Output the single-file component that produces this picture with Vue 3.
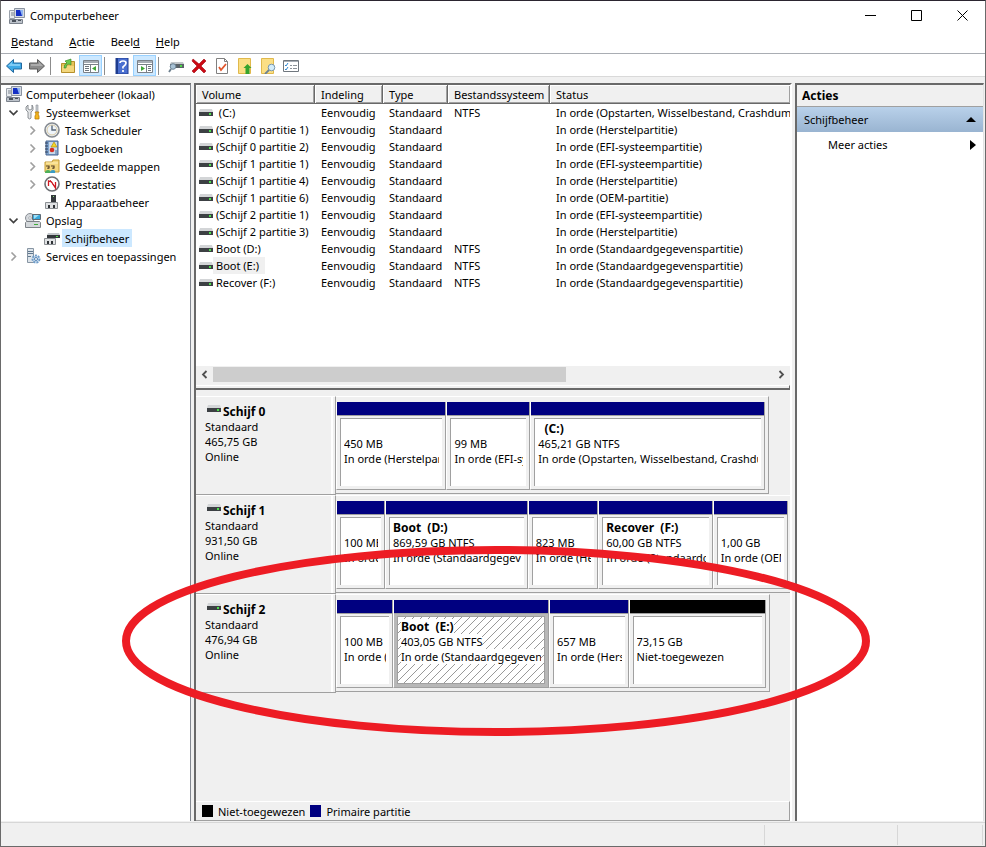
<template>
  <div class="window">
    <svg class="sprite" aria-hidden="true">
      <symbol id="i-computer" viewBox="0 0 16 16">
        <path d="M5.500.5h10v9h-10z" fill="#d5dae2" stroke="#8b93a0" />
        <path d="M7 2h7v6H7z" fill="#1530c4" />
        <path d="M11 2h3v6h-1z" fill="#8fb4f2" />
        <path d="M.5 2.500h5v8h-5z" fill="#e8ebee" stroke="#9aa1aa" />
        <path d="M2 5h3M2 7h3" stroke="#79818d" />
        <path d="M.5 11.500h13v4H.5z" fill="#bcc2ca" stroke="#7b828c" />
        <path d="M3 12h4v2H3zM9 12h3v1H9z" fill="#4a515b" />
      </symbol>
      <symbol id="i-tools" viewBox="0 0 16 16">
        <path d="M3 1v4l2 1 2-1V1l1 2v3L6 8v6q-1 2-3 0V8L1 6V3z" fill="#e4e6e8" stroke="#74797f" stroke-width=".8" />
        <path d="M11 1h2v7h-2z" fill="#c8cdd2" stroke="#8a8f95" stroke-width=".6" />
        <path d="M10 8h4l-1 2 1 2v3h-4v-3l1-2z" fill="#f5b51c" stroke="#b87d0a" stroke-width=".8" />
      </symbol>
      <symbol id="i-clock" viewBox="0 0 16 16">
        <circle cx="8" cy="8" r="7" fill="#eef4fa" stroke="#858a90" stroke-width="1.600" />
        <circle cx="8" cy="8" r="5" fill="none" stroke="#d9c9a2" />
        <path d="M8 3.500V8h4" fill="none" stroke="#59677a" stroke-width="1.400" />
      </symbol>
      <symbol id="i-log" viewBox="0 0 16 16">
        <path d="M2 1h12v14H2z" fill="#7fa4cf" stroke="#4a6791" />
        <path d="M5 2h8v12H5z" fill="#c9d9ea" />
        <path d="M1 3h3M1 6h3M1 9h3M1 12h3" stroke="#2e3f5a" />
        <path d="M10 2l3 5H7z" fill="#f6d525" stroke="#a98b08" stroke-width=".6" />
        <circle cx="8" cy="10" r="2.300" fill="#d62d22" />
        <path d="M11 11h2M11 13h2" stroke="#486d9b" />
      </symbol>
      <symbol id="i-shared" viewBox="0 0 16 16">
        <path d="M1 4h7l1-2h6v12H1z" fill="#f4d67c" stroke="#c49b35" />
        <path d="M2 5h12" stroke="#fff0b8" />
        <path d="M2 8h3v2H4v1M7 8h3v2H9v1" fill="none" stroke="#554026" stroke-width="1.200" />
        <path d="M1 15q0-3 3-3t2 3z" fill="#4eb05a" />
        <path d="M6 15q0-3 3-3t2 3z" fill="#3a9bc4" />
      </symbol>
      <symbol id="i-perf" viewBox="0 0 16 16">
        <circle cx="8" cy="8" r="7" fill="#fff" stroke="#6c6f73" stroke-width="1.600" />
        <path d="M4.500 10V5l3 1 4 6V6" fill="none" stroke="#cf1820" stroke-width="1.300" />
        <path d="M6 4l5 7" stroke="#cf1820" />
      </symbol>
      <symbol id="i-device" viewBox="0 0 16 16">
        <path d="M7 1h5v8H7z" fill="#34383d" />
        <path d="M9 2h1v1H9z" fill="#8ee07b" />
        <path d="M1.500 8.500h12v6h-12z" fill="#dfe1e3" stroke="#8b8f93" />
        <path d="M4 11h2v3H4zM9 11h2v3H9z" fill="#2f3236" />
      </symbol>
      <symbol id="i-storage" viewBox="0 0 16 16">
        <circle cx="5" cy="6" r="4.500" fill="#d5d9dd" stroke="#888d93" />
        <circle cx="5" cy="6" r="1.300" fill="#fff" stroke="#888d93" stroke-width=".6" />
        <path d="M7.500 2.500h8v5h-8z" fill="#38a9dd" stroke="#5f6a74" />
        <path d="M9 3h5l-5 4z" fill="#a2def5" />
        <path d="M.5 10.500l1-1h13l1 1v5H.5z" fill="#d4d8db" stroke="#7d8287" />
        <path d="M9 12h4v1H9z" fill="#3fae3b" />
      </symbol>
      <symbol id="i-diskmgmt" viewBox="0 0 16 16">
        <path d="M4 3h11l1 2H3z" fill="#c3c7ca" />
        <path d="M3 5h13v3H3z" fill="#33373b" />
        <path d="M12 6h2v1h-2z" fill="#4fdc48" />
        <path d="M.5 8.500h11v6H.5z" fill="#e1e3e5" stroke="#8b8f93" />
        <path d="M3 11h2v3H3zM7 11h2v3H7z" fill="#2f3236" />
      </symbol>
      <symbol id="i-services" viewBox="0 0 16 16">
        <path d="M2.500.5h6v14h-6z" fill="#dde4ea" stroke="#8795a3" />
        <path d="M3 3.500h5M3 5.500h5M3 8.500h3" stroke="#60788f" />
        <circle cx="11" cy="11" r="3.500" fill="#cfe0f0" stroke="#6f9cc8" stroke-width="2" stroke-dasharray="2 1" />
        <circle cx="11" cy="11" r="1.500" fill="#fff" stroke="#5483b4" />
      </symbol>
      <symbol id="i-drive" viewBox="0 0 14 10">
        <path d="M1 1h12l1 3H0z" fill="#d3d5d7" />
        <path d="M0 4h14v4H0z" fill="#3c4043" />
        <path d="M10 5h2v2h-2z" fill="#4be04b" />
      </symbol>
      <symbol id="i-back" viewBox="0 0 16 16">
        <path d="M.5 8l7-6.500v3.500h8v6h-8v3.500z" fill="#3fa9e6" stroke="#22689e" stroke-linejoin="round" />
        <path d="M2 8l4-4v2h8v2z" fill="#7fcbf5" />
      </symbol>
      <symbol id="i-forward" viewBox="0 0 16 16">
        <path d="M15.500 8l-7-6.500v3.500h-8v6h8v3.500z" fill="#8c8c8c" stroke="#5c5c5c" stroke-linejoin="round" />
        <path d="M14 8l-4-4v2H2v2z" fill="#acacac" />
      </symbol>
      <symbol id="i-folderup" viewBox="0 0 16 16">
        <path d="M1.500 5.500h5l1-2h7v11h-13z" fill="#e6c25a" stroke="#b58f2b" />
        <path d="M2 8h12v6H2z" fill="#f2d67c" />
        <path d="M4 10q0-4 3-5L5 3l6-2v6L9 6Q6 6 6 10z" fill="#6dc94e" stroke="#2e8420" stroke-width=".6" />
      </symbol>
      <symbol id="i-treepane" viewBox="0 0 16 16">
        <path d="M.5 2.500h15v12H.5z" fill="#fff" stroke="#7a8088" />
        <path d="M1 3h14v2H1z" fill="#a7adb5" />
        <path d="M1 6.500h14M7.500 7v7" stroke="#7a8088" />
        <path d="M2 8.500h4M2 10.500h4M2 12.500h4" stroke="#6d747c" />
        <path d="M13 8v5l-4-2.500z" fill="#3ea635" />
      </symbol>
      <symbol id="i-help" viewBox="0 0 16 16">
        <path d="M2 0h12v16H2z" fill="#4a6fd0" stroke="#1e3d91" />
        <path d="M2 0h2v16H2z" fill="#1d3c8e" />
        <path d="M6 5q0-2 3-2t3 2q0 2-3 4v1.500M9 12v2" fill="none" stroke="#fff" stroke-width="1.700" />
      </symbol>
      <symbol id="i-actionpane" viewBox="0 0 16 16">
        <path d="M.5 2.500h15v12H.5z" fill="#fff" stroke="#7a8088" />
        <path d="M1 3h14v2H1z" fill="#a7adb5" />
        <path d="M1 6.500h14M9.500 7v7" stroke="#7a8088" />
        <path d="M11 8.500h3M11 10.500h3M11 12.500h3" stroke="#6d747c" />
        <path d="M4 8v5l4-2.500z" fill="#3ea635" />
      </symbol>
      <symbol id="i-rescan" viewBox="0 0 16 16">
        <path d="M3 4h12l1 2H2z" fill="#c3c7ca" />
        <path d="M2 6h14v4H2z" fill="#5b6368" />
        <path d="M12 7h2v2h-2z" fill="#4fdc48" />
        <circle cx="5" cy="8.500" r="2.800" fill="#a9c3d6" stroke="#6f8799" />
        <path d="M3 11l-2 3" stroke="#6d7f8e" stroke-width="1.800" />
      </symbol>
      <symbol id="i-delete" viewBox="0 0 16 16">
        <path d="M2 1l6 5 5-5 2 2-5 5 5 5-2 2-5-5-5 5-2-2 5-5-5-5z" fill="#cc0a14" stroke="#9d0710" stroke-width=".6" />
      </symbol>
      <symbol id="i-check" viewBox="0 0 16 16">
        <path d="M2.500.5h8l3 3v12h-11z" fill="#fff" stroke="#808080" />
        <path d="M10.500.5v3h3" fill="none" stroke="#808080" />
        <path d="M5 9l2 3 5-6" fill="none" stroke="#e1562c" stroke-width="1.800" />
      </symbol>
      <symbol id="i-foldernew" viewBox="0 0 16 16">
        <path d="M1.500.5h12v15h-12z" fill="#fbdf85" stroke="#e0b94c" />
        <path d="M10.500 6l4 4h-2v6h-4v-6h-2z" fill="#34a32d" />
      </symbol>
      <symbol id="i-foldersearch" viewBox="0 0 16 16">
        <path d="M1.500.5h12v15h-12z" fill="#fbdf85" stroke="#e0b94c" />
        <circle cx="11.500" cy="9.500" r="3.300" fill="#d3ecfa" stroke="#7896ac" />
        <path d="M9 12l-4 4" stroke="#6c8291" stroke-width="1.800" />
      </symbol>
      <symbol id="i-list" viewBox="0 0 16 16">
        <path d="M.5 2.500h15v11H.5z" fill="#fff" stroke="#70777e" />
        <path d="M1 3.500h14" stroke="#a7adb5" />
        <path d="M2 7l1 1 2-3M2 11l1 1 2-3" fill="none" stroke="#2f86cf" />
        <path d="M7 7.500h2M10 7.500h4M7 10.500h2M10 10.500h4" stroke="#8b9299" />
      </symbol>
    </svg>

    <header class="titlebar">
      <svg class="icon"><use href="#i-computer" /></svg>
      <h1>Computerbeheer</h1>
      <div class="controls">
        <button aria-label="Minimaliseren">
          <svg width="11" height="11"><path d="M0 5.500h11" stroke="#000" /></svg>
        </button>
        <button aria-label="Maximaliseren">
          <svg width="11" height="11"><path d="M.5.5h10v10H.5z" fill="none" stroke="#000" /></svg>
        </button>
        <button aria-label="Sluiten">
          <svg width="11" height="11"><path d="M.5.5l10 10M10.500.5l-10 10" stroke="#000" /></svg>
        </button>
      </div>
    </header>

    <nav class="menubar">
      <button><u>B</u>estand</button>
      <button><u>A</u>ctie</button>
      <button>Beel<u>d</u></button>
      <button><u>H</u>elp</button>
    </nav>

    <div class="toolbar">
      <template v-for="(group, g) in tools" :key="g">
        <span v-if="g > 0" class="separator"></span>
        <button
          v-for="tool in group"
          :key="tool.icon"
          :class="{ pressed: tool.pressed }"
          :aria-label="tool.label"
        >
          <svg class="icon"><use :href="`#i-${tool.icon}`" /></svg>
        </button>
      </template>
    </div>

    <main class="panes">
      <aside class="tree">
        <ul>
          <li v-for="node in tree" :key="node.label" :class="`level-${node.level}`">
            <span v-if="node.level > 0" class="arrow">
              <svg v-if="node.state === 'open'" width="9" height="9">
                <path d="M.5 2.500l4 4 4-4" fill="none" stroke="#404040" stroke-width="1.600" />
              </svg>
              <svg v-if="node.state === 'closed'" width="9" height="9">
                <path d="M2.500.5l4 4-4 4" fill="none" stroke="#a0a0a0" stroke-width="1.600" />
              </svg>
            </span>
            <svg class="icon"><use :href="`#i-${node.icon}`" /></svg>
            <button :class="{ selected: node.selected }">{{ node.label }}</button>
          </li>
        </ul>
      </aside>

      <section class="center">
        <div class="volumes">
          <table>
            <colgroup>
              <col class="col-volume" />
              <col class="col-layout" />
              <col class="col-type" />
              <col class="col-fs" />
              <col />
            </colgroup>
            <thead>
              <tr>
                <th v-for="column in columns" :key="column">{{ column }}</th>
              </tr>
            </thead>
            <tbody>
              <tr v-for="volume in volumes" :key="volume.name">
                <td class="volume-cell">
                  <svg class="drive"><use href="#i-drive" /></svg>
                  <span :class="{ focused: volume.focused }">{{ volume.name }}</span>
                </td>
                <td>Eenvoudig</td>
                <td>Standaard</td>
                <td>{{ volume.fs }}</td>
                <td>{{ volume.status }}</td>
              </tr>
            </tbody>
          </table>
        </div>

        <div class="scrollbar">
          <button aria-label="Naar links">
            <svg width="7" height="9"><path d="M5.500 1L2 4.500 5.500 8" fill="none" stroke="#505050" stroke-width="1.800" /></svg>
          </button>
          <div class="scroll-track"><div class="thumb"></div></div>
          <button aria-label="Naar rechts">
            <svg width="7" height="9"><path d="M1.500 1L5 4.500 1.500 8" fill="none" stroke="#505050" stroke-width="1.800" /></svg>
          </button>
        </div>
        <div class="splitter"></div>

        <div class="disks">
          <div v-for="disk in disks" :key="disk.name" class="disk">
            <div class="disk-label">
              <h2><svg class="drive"><use href="#i-drive" /></svg>{{ disk.name }}</h2>
              <p>Standaard</p>
              <p>{{ disk.size }}</p>
              <p>Online</p>
            </div>
            <div class="partitions" :style="{ width: trackWidth(disk) }">
              <div
                v-for="(part, i) in disk.parts"
                :key="i"
                class="partition"
                :class="{ selected: part.selected, free: part.free }"
                :style="{ flexGrow: part.span }"
              >
                <div class="bar"></div>
                <div class="body">
                  <div class="box">
                    <p><b>{{ part.name || '\u00a0' }}</b></p>
                    <p><span>{{ part.size }}</span></p>
                    <p><span>{{ part.status }}</span></p>
                  </div>
                </div>
              </div>
            </div>
          </div>
        </div>

        <footer class="legend">
          <span class="swatch black"></span>Niet-toegewezen
          <span class="swatch navy"></span>Primaire partitie
        </footer>
      </section>

      <aside class="actions">
        <h2>Acties</h2>
        <button class="action-head">
          Schijfbeheer
          <svg width="10" height="5"><path d="M0 5l5-5 5 5z" /></svg>
        </button>
        <button class="action-item">
          Meer acties
          <svg width="6" height="10"><path d="M0 0l6 5-6 5z" /></svg>
        </button>
      </aside>
    </main>

    <div class="statusbar">
      <span></span>
      <span></span>
      <span></span>
    </div>

    <svg class="marker" width="750" height="194" aria-hidden="true">
      <ellipse cx="376" cy="97" rx="370" ry="91" fill="none" stroke="#ed1c24" stroke-width="8" />
    </svg>
  </div>
</template>

<script setup>
const tools = [
  [
    { icon: 'back', label: 'Vorige' },
    { icon: 'forward', label: 'Volgende' }
  ],
  [
    { icon: 'folderup', label: 'Niveau omhoog' },
    { icon: 'treepane', label: 'Consolestructuur', pressed: true }
  ],
  [
    { icon: 'help', label: 'Help' },
    { icon: 'actionpane', label: 'Actievenster', pressed: true }
  ],
  [
    { icon: 'rescan', label: 'Opnieuw scannen' },
    { icon: 'delete', label: 'Verwijderen' },
    { icon: 'check', label: 'Eigenschappen' },
    { icon: 'foldernew', label: 'Openen' },
    { icon: 'foldersearch', label: 'Verkennen' },
    { icon: 'list', label: 'Instellingen' }
  ]
]

const tree = [
  { label: 'Computerbeheer (lokaal)', icon: 'computer', level: 0 },
  { label: 'Systeemwerkset', icon: 'tools', level: 1, state: 'open' },
  { label: 'Task Scheduler', icon: 'clock', level: 2, state: 'closed' },
  { label: 'Logboeken', icon: 'log', level: 2, state: 'closed' },
  { label: 'Gedeelde mappen', icon: 'shared', level: 2, state: 'closed' },
  { label: 'Prestaties', icon: 'perf', level: 2, state: 'closed' },
  { label: 'Apparaatbeheer', icon: 'device', level: 2 },
  { label: 'Opslag', icon: 'storage', level: 1, state: 'open' },
  { label: 'Schijfbeheer', icon: 'diskmgmt', level: 2, selected: true },
  { label: 'Services en toepassingen', icon: 'services', level: 1, state: 'closed' }
]

const columns = ['Volume', 'Indeling', 'Type', 'Bestandssysteem', 'Status']

const volumes = [
  { name: '\u00a0(C:)', fs: 'NTFS', status: 'In orde (Opstarten, Wisselbestand, Crashdump)' },
  { name: '(Schijf 0 partitie 1)', status: 'In orde (Herstelpartitie)' },
  { name: '(Schijf 0 partitie 2)', status: 'In orde (EFI-systeempartitie)' },
  { name: '(Schijf 1 partitie 1)', status: 'In orde (EFI-systeempartitie)' },
  { name: '(Schijf 1 partitie 4)', status: 'In orde (Herstelpartitie)' },
  { name: '(Schijf 1 partitie 6)', status: 'In orde (OEM-partitie)' },
  { name: '(Schijf 2 partitie 1)', status: 'In orde (EFI-systeempartitie)' },
  { name: '(Schijf 2 partitie 3)', status: 'In orde (Herstelpartitie)' },
  { name: 'Boot (D:)', fs: 'NTFS', status: 'In orde (Standaardgegevenspartitie)' },
  { name: 'Boot (E:)', fs: 'NTFS', status: 'In orde (Standaardgegevenspartitie)', focused: true },
  { name: 'Recover (F:)', fs: 'NTFS', status: 'In orde (Standaardgegevenspartitie)' }
]

// span is the relative width of a partition, FULL_SPAN fills the whole row
const FULL_SPAN = 454

const disks = [
  {
    name: 'Schijf 0',
    size: '465,75 GB',
    parts: [
      { span: 110, size: '450 MB', status: 'In orde (Herstelpartitie)' },
      { span: 83, size: '99 MB', status: 'In orde (EFI-systeempartitie)' },
      { span: 236, name: '\u00a0\u00a0(C:)', size: '465,21 GB NTFS', status: 'In orde (Opstarten, Wisselbestand, Crashdump)' }
    ]
  },
  {
    name: 'Schijf 1',
    size: '931,50 GB',
    parts: [
      { span: 48, size: '100 MB', status: 'In orde' },
      { span: 144, name: 'Boot\u00a0 (D:)', size: '869,59 GB NTFS', status: 'In orde (Standaardgegevenspartitie)' },
      { span: 70, size: '823 MB', status: 'In orde (Herstelpartitie)' },
      { span: 115, name: 'Recover\u00a0 (F:)', size: '60,00 GB NTFS', status: 'In orde (Standaardgegevenspartitie)' },
      { span: 75, size: '1,00 GB', status: 'In orde (OEM-partitie)' }
    ]
  },
  {
    name: 'Schijf 2',
    size: '476,94 GB',
    parts: [
      { span: 56, size: '100 MB', status: 'In orde (EFI-systeempartitie)' },
      { span: 157, name: 'Boot\u00a0 (E:)', size: '403,05 GB NTFS', status: 'In orde (Standaardgegevenspartitie)', selected: true },
      { span: 79, size: '657 MB', status: 'In orde (Herstelpartitie)' },
      { span: 138, size: '73,15 GB', status: 'Niet-toegewezen', free: true }
    ]
  }
]

const trackWidth = (disk) => {
  const total = disk.parts.reduce((sum, part) => sum + part.span, 0)
  return `calc((100% - 140px) * ${total / FULL_SPAN} + 4px)`
}
</script>

<style>
body {
  margin: 0;
}
</style>

<style scoped>
.window {
  position: relative;
  display: flex;
  flex-direction: column;
  box-sizing: border-box;
  min-height: 100vh;
  border: 1px solid #6a6a6a;
  border-top-color: #2b2530;
  background: #fff;
  color: #000;
  font-family: "Noto Sans", "Open Sans", sans-serif;
  font-size: 11px;
  line-height: 15px;
  overflow: hidden;
}

.window * {
  box-sizing: border-box;
}

.sprite {
  position: absolute;
  width: 0;
  height: 0;
}

button {
  border: 0;
  padding: 0;
  background: none;
  color: inherit;
  font: inherit;
}

h1,
h2,
p,
ul {
  margin: 0;
  padding: 0;
}

h2,
b {
  font-size: 12px;
}

.icon {
  flex: none;
  width: 16px;
  height: 16px;
}

.drive {
  flex: none;
  width: 14px;
  height: 10px;
}

/* Title bar, menu and toolbar */
.titlebar {
  display: flex;
  align-items: center;
  gap: 5px;
  height: 29px;
  padding-left: 8px;
}

.titlebar h1 {
  flex: 1;
  font-size: 11px;
  font-weight: 400;
}

.controls {
  display: flex;
}

.controls button {
  display: flex;
  align-items: center;
  justify-content: center;
  width: 46px;
  height: 29px;
}

.menubar {
  display: flex;
  gap: 16px;
  height: 24px;
  padding-left: 10px;
  border-bottom: 1px solid #a9adb3;
}

.toolbar {
  display: flex;
  align-items: center;
  height: 23px;
  padding: 1px 0 0 1px;
  border-bottom: 1px solid #d9d9d9;
}

.toolbar button {
  display: flex;
  align-items: center;
  justify-content: center;
  width: 23px;
  height: 21px;
}

.toolbar button.pressed {
  border: 1px solid #99d1ff;
  background: #cce8ff;
}

.separator {
  width: 1px;
  height: 18px;
  margin: 0 5px 0 2px;
  background: #8c8c8c;
}

/* Panes */
.panes {
  flex: 1;
  display: grid;
  grid-template-columns: 190px minmax(0, 1fr) 189px;
  column-gap: 3px;
  padding: 6px 1px 1px 0;
  background: #f0f0f0;
}

.tree {
  border-top: 2px solid #696969;
  border-right: 1px solid #828790;
  background: #fff;
}

.tree ul {
  list-style: none;
}

.tree li {
  display: flex;
  align-items: center;
  gap: 2px;
  height: 18px;
}

.tree li button {
  height: 18px;
  padding: 0 3px;
  white-space: nowrap;
}

.tree li button.selected {
  background: #cce8ff;
}

.level-0 {
  padding-left: 5px;
}

.level-0 button {
  margin-left: -1px;
}

.level-1 {
  padding-left: 5px;
}

.level-2 {
  padding-left: 24px;
}

.arrow {
  display: flex;
  align-items: center;
  justify-content: center;
  width: 14px;
  margin-right: 3px;
}

.center {
  display: flex;
  flex-direction: column;
  min-width: 0;
  border-top: 2px solid #696969;
  border-left: 2px solid #696969;
  border-right: 2px solid #fff;
}

.volumes {
  flex: none;
  height: 281px;
  background: #fff;
  overflow: hidden;
}

table {
  width: 100%;
  table-layout: fixed;
  border-collapse: separate;
  border-spacing: 0;
}

.col-volume {
  width: 119px;
}

.col-layout {
  width: 68px;
}

.col-type {
  width: 65px;
}

.col-fs {
  width: 102px;
}

th {
  height: 19px;
  padding: 0 0 0 6px;
  border-right: 1px solid #696969;
  border-bottom: 1px solid #696969;
  box-shadow: inset 1px 1px #fff, inset -1px -1px #a0a0a0;
  background: #f0f0f0;
  font-weight: 400;
  text-align: left;
  white-space: nowrap;
}

th:last-child {
  border-right: 0;
}

td {
  height: 17px;
  padding: 0 0 0 6px;
  line-height: 17px;
  white-space: nowrap;
  overflow: hidden;
}

.volume-cell {
  display: flex;
  align-items: center;
  padding-left: 3px;
}

.volume-cell span {
  padding: 0 3px;
}

.volume-cell .focused {
  padding-right: 6px;
  background: #f0f0f0;
}

.scrollbar {
  display: flex;
  height: 17px;
  background: #f0f0f0;
}

.scrollbar button {
  display: flex;
  align-items: center;
  justify-content: center;
  width: 17px;
}

.scroll-track {
  flex: 1;
}

.thumb {
  width: 63%;
  height: 15px;
  margin-top: 1px;
  background: #cdcdcd;
}

.splitter {
  height: 5px;
  margin-top: 2px;
  border-top: 1px solid #fff;
  border-right: 1px solid #696969;
  border-bottom: 2px solid #696969;
}

/* Disk view */
.disks {
  flex: 1;
  padding-top: 6px;
  overflow: hidden;
}

.disk {
  display: flex;
  height: 99px;
}

.disk-label {
  flex: none;
  width: 140px;
  padding: 7px 0 0 9px;
  border-top: 1px solid #fff;
  border-bottom: 1px solid #a0a0a0;
  border-right: 1px solid #a0a0a0;
  box-shadow: inset -2px 0 #f0f0f0, inset -4px 0 #fff;
}

.disk-label h2 {
  display: flex;
  gap: 2px;
  padding-left: 2px;
}

.partitions {
  flex: none;
  display: flex;
  height: 98px;
  padding: 5px 3px 3px 0;
  border-top: 1px solid #fff;
  border-right: 1px solid #a0a0a0;
  border-bottom: 1px solid #a0a0a0;
}

.partition {
  flex: 1 1 0;
  display: flex;
  flex-direction: column;
  min-width: 0;
  border-left: 1px solid #fff;
  border-right: 1px solid #a0a0a0;
  border-bottom: 1px solid #a0a0a0;
}

.bar {
  height: 14px;
  border-bottom: 1px solid #a0a0a0;
  background: #000080;
}

.free .bar {
  background: #000;
}

.body {
  flex: 1;
  display: flex;
  padding: 2px 3px 3px;
}

.box {
  flex: 1;
  min-width: 0;
  padding: 2px 3px 0;
  border-top: 1px solid #a0a0a0;
  border-left: 1px solid #a0a0a0;
  background: #fff;
  white-space: nowrap;
}

.box p {
  height: 15px;
  overflow: hidden;
}

.partition.selected .body {
  background: #b8b8b8;
}

.partition.selected .box {
  border: 1px solid #a0a0a0;
  background: linear-gradient(to bottom right, #fff 46%, #999 46% 54%, #fff 54%) 0 0 / 8px 8px;
}

.partition.selected b,
.partition.selected span {
  background: #fff;
}

.legend {
  display: flex;
  align-items: center;
  height: 20px;
  padding-left: 6px;
  border-top: 1px solid #fff;
  border-right: 1px solid #a0a0a0;
  border-bottom: 1px solid #a0a0a0;
}

.swatch {
  width: 11px;
  height: 12px;
  margin-right: 5px;
}

.black {
  background: #000;
}

.navy {
  margin-left: 5px;
  background: #000080;
}

/* Actions pane */
.actions {
  border-top: 2px solid #696969;
  border-left: 2px solid #696969;
  border-right: 1px solid #e3e3e3;
  background: #fff;
}

.actions h2 {
  height: 22px;
  padding-left: 5px;
  border-bottom: 1px solid #a0a0a0;
  background: #f0f0f0;
  line-height: 22px;
}

.actions button {
  display: flex;
  align-items: center;
  justify-content: space-between;
  width: 100%;
  height: 25px;
  padding: 0 7px;
}

.actions .action-head {
  background: linear-gradient(#b9d1ea, #99b4d1);
}

.actions .action-item {
  padding-left: 31px;
}

.statusbar {
  display: flex;
  justify-content: flex-end;
  height: 24px;
  padding: 2px 2px 1px 0;
  border-top: 1px solid #d7d7d7;
  background: #f0f0f0;
}

.statusbar span {
  border-right: 1px solid #d7d7d7;
}

.statusbar span:first-child {
  flex: 1;
}

.statusbar span:nth-child(2) {
  width: 133px;
}

.statusbar span:nth-child(3) {
  width: 85px;
}

/* Hand-drawn highlight around the last disk */
.marker {
  position: absolute;
  top: 543px;
  left: 119px;
  pointer-events: none;
}
</style>
